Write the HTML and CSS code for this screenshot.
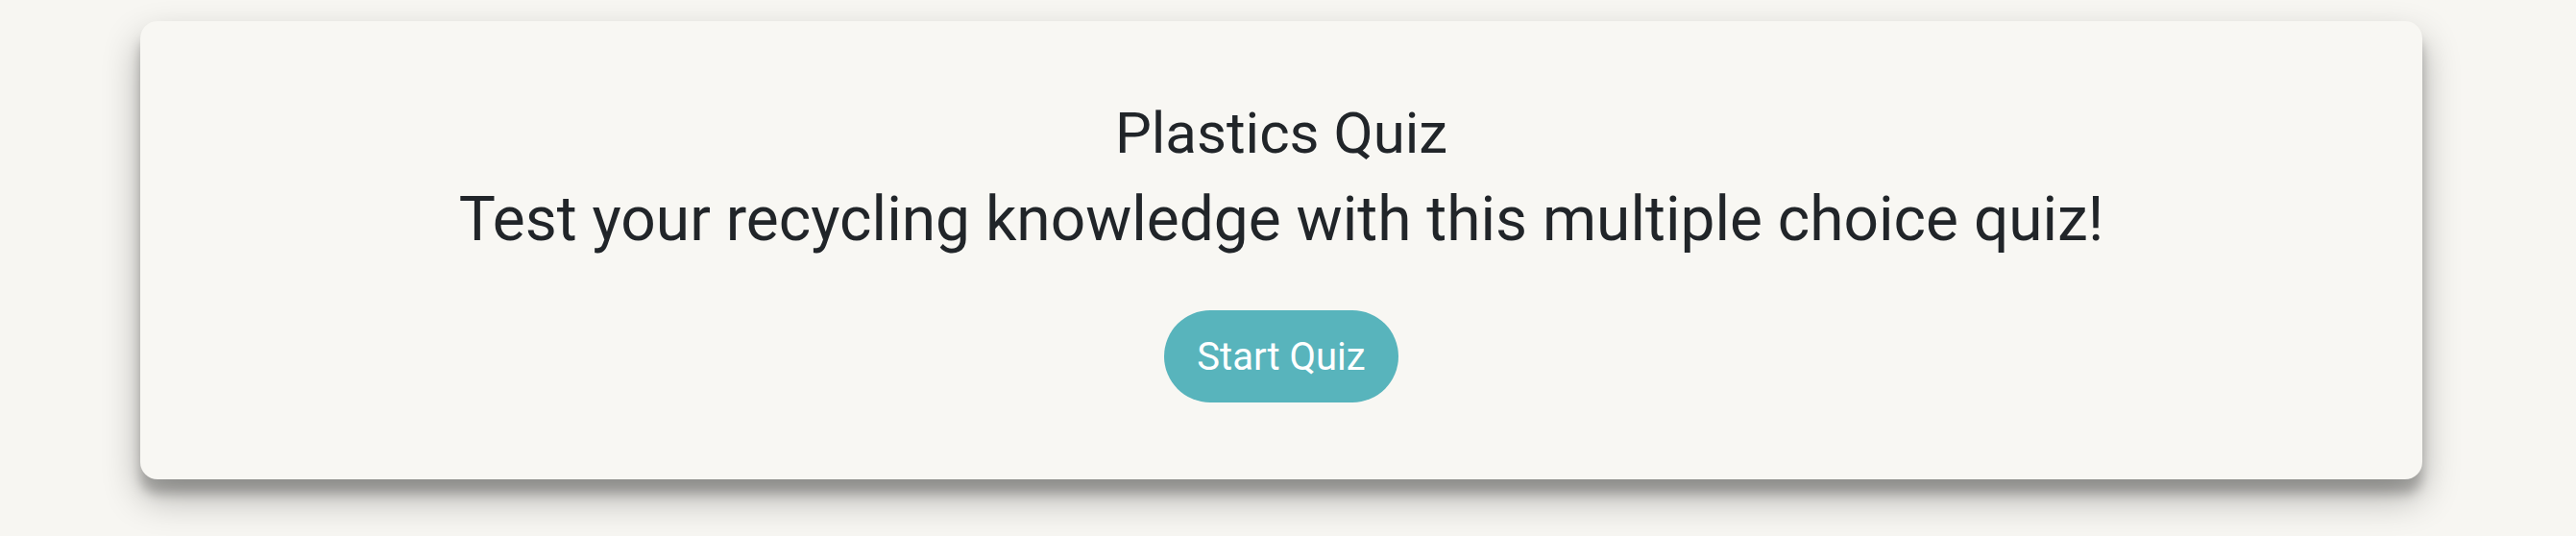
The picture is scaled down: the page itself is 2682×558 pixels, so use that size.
FILE: index.html
```html
<!DOCTYPE html>
<html lang="en">
<head>
<meta charset="utf-8">
<title>Plastics Quiz</title>
<link rel="stylesheet" href="styles.css">
</head>
<body>
<main class="page">
  <section class="card">
    <h1 class="title">Plastics Quiz</h1>
    <p class="subtitle">Test your recycling knowledge with this multiple choice quiz!</p>
    <button class="start-btn" type="button">Start Quiz</button>
  </section>
</main>
</body>
</html>
```

FILE: styles.css
```css
html, body {
  margin: 0;
  padding: 0;
  background: #f7f6f2;
}

body {
  font-family: Roboto, "Liberation Sans", sans-serif;
  color: #212529;
}

.page {
  padding: 22px 160px 59px 146px;
  min-height: 100vh;
  box-sizing: border-box;
}

.card {
  background: #f8f7f3;
  border-radius: 18px;
  height: 477px;
  box-sizing: border-box;
  padding-top: 72px;
  display: flex;
  flex-direction: column;
  align-items: center;
  box-shadow: 0 19px 38px rgba(0, 0, 0, 0.3), 0 15px 12px rgba(0, 0, 0, 0.22);
}

.title,
.subtitle {
  margin: 0;
  font-weight: 400;
  line-height: 90px;
  text-align: center;
}

.title {
  font-size: 60px;
}

.subtitle {
  font-size: 64px;
}

.start-btn {
  margin-top: 49px;
  width: 244px;
  height: 96px;
  border: none;
  border-radius: 48px;
  background: #58b4bc;
  color: #ffffff;
  font-family: Roboto, "Liberation Sans", sans-serif;
  font-size: 40px;
  padding: 0;
  cursor: pointer;
}
```
